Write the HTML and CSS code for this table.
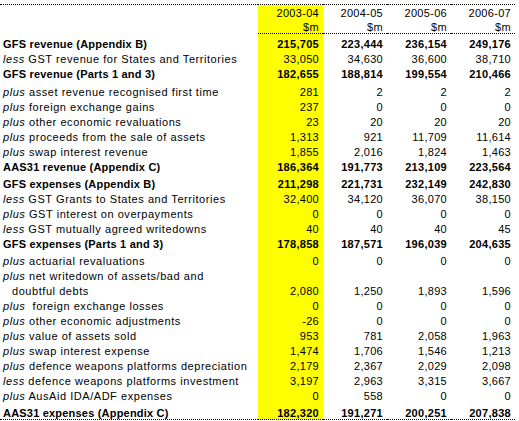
FILE: index.html
```html
<!DOCTYPE html>
<html lang="en">
<head>
    <meta charset="UTF-8">
    <meta name="viewport" content="width=device-width, initial-scale=1.0">
    <title>AAS31 reconciliation</title>
    <link rel="stylesheet" href="styles.css">
</head>
<body>
    <table class="recon">
        <colgroup>
            <col class="col_label">
            <col class="col_hl">
            <col class="col_num">
            <col class="col_num">
            <col class="col_num">
        </colgroup>
        <thead>
            <tr class="head_year">
                <th class="label"></th>
                <th class="num hl">2003-04</th>
                <th class="num">2004-05</th>
                <th class="num">2005-06</th>
                <th class="num">2006-07</th>
            </tr>
            <tr class="head_unit">
                <th class="label"></th>
                <th class="num hl">$m</th>
                <th class="num">$m</th>
                <th class="num">$m</th>
                <th class="num">$m</th>
            </tr>
        </thead>
        <tbody>
            <tr class="total gap">
                <td class="label">GFS revenue (Appendix B)</td>
                <td class="num hl">215,705</td><td class="num">223,444</td><td class="num">236,154</td><td class="num">249,176</td>
            </tr>
            <tr>
                <td class="label"><em>less</em> GST revenue for States and Territories</td>
                <td class="num hl">33,050</td><td class="num">34,630</td><td class="num">36,600</td><td class="num">38,710</td>
            </tr>
            <tr class="total">
                <td class="label">GFS revenue (Parts 1 and 3)</td>
                <td class="num hl">182,655</td><td class="num">188,814</td><td class="num">199,554</td><td class="num">210,466</td>
            </tr>
            <tr class="gap">
                <td class="label"><em>plus</em> asset revenue recognised first time</td>
                <td class="num hl">281</td><td class="num">2</td><td class="num">2</td><td class="num">2</td>
            </tr>
            <tr>
                <td class="label"><em>plus</em> foreign exchange gains</td>
                <td class="num hl">237</td><td class="num">0</td><td class="num">0</td><td class="num">0</td>
            </tr>
            <tr>
                <td class="label"><em>plus</em> other economic revaluations</td>
                <td class="num hl">23</td><td class="num">20</td><td class="num">20</td><td class="num">20</td>
            </tr>
            <tr>
                <td class="label"><em>plus</em> proceeds from the sale of assets</td>
                <td class="num hl">1,313</td><td class="num">921</td><td class="num">11,709</td><td class="num">11,614</td>
            </tr>
            <tr>
                <td class="label"><em>plus</em> swap interest revenue</td>
                <td class="num hl">1,855</td><td class="num">2,016</td><td class="num">1,824</td><td class="num">1,463</td>
            </tr>
            <tr class="total">
                <td class="label">AAS31 revenue (Appendix C)</td>
                <td class="num hl">186,364</td><td class="num">191,773</td><td class="num">213,109</td><td class="num">223,564</td>
            </tr>
            <tr class="total gap_sm">
                <td class="label">GFS expenses (Appendix B)</td>
                <td class="num hl">211,298</td><td class="num">221,731</td><td class="num">232,149</td><td class="num">242,830</td>
            </tr>
            <tr>
                <td class="label"><em>less</em> GST Grants to States and Territories</td>
                <td class="num hl">32,400</td><td class="num">34,120</td><td class="num">36,070</td><td class="num">38,150</td>
            </tr>
            <tr>
                <td class="label"><em>plus</em> GST interest on overpayments</td>
                <td class="num hl">0</td><td class="num">0</td><td class="num">0</td><td class="num">0</td>
            </tr>
            <tr>
                <td class="label"><em>less</em> GST mutually agreed writedowns</td>
                <td class="num hl">40</td><td class="num">40</td><td class="num">40</td><td class="num">45</td>
            </tr>
            <tr class="total">
                <td class="label">GFS expenses (Parts 1 and 3)</td>
                <td class="num hl">178,858</td><td class="num">187,571</td><td class="num">196,039</td><td class="num">204,635</td>
            </tr>
            <tr class="gap_sm">
                <td class="label"><em>plus</em> actuarial revaluations</td>
                <td class="num hl">0</td><td class="num">0</td><td class="num">0</td><td class="num">0</td>
            </tr>
            <tr>
                <td class="label"><em>plus</em> net writedown of assets/bad and</td>
                <td class="num hl"></td><td class="num"></td><td class="num"></td><td class="num"></td>
            </tr>
            <tr>
                <td class="label indent">doubtful debts</td>
                <td class="num hl">2,080</td><td class="num">1,250</td><td class="num">1,893</td><td class="num">1,596</td>
            </tr>
            <tr>
                <td class="label"><em>plus</em>&nbsp; foreign exchange losses</td>
                <td class="num hl">0</td><td class="num">0</td><td class="num">0</td><td class="num">0</td>
            </tr>
            <tr>
                <td class="label"><em>plus</em> other economic adjustments</td>
                <td class="num hl">-26</td><td class="num">0</td><td class="num">0</td><td class="num">0</td>
            </tr>
            <tr>
                <td class="label"><em>plus</em> value of assets sold</td>
                <td class="num hl">953</td><td class="num">781</td><td class="num">2,058</td><td class="num">1,963</td>
            </tr>
            <tr>
                <td class="label"><em>plus</em> swap interest expense</td>
                <td class="num hl">1,474</td><td class="num">1,706</td><td class="num">1,546</td><td class="num">1,213</td>
            </tr>
            <tr>
                <td class="label"><em>plus</em> defence weapons platforms depreciation</td>
                <td class="num hl">2,179</td><td class="num">2,367</td><td class="num">2,029</td><td class="num">2,098</td>
            </tr>
            <tr>
                <td class="label"><em>less</em> defence weapons platforms investment</td>
                <td class="num hl">3,197</td><td class="num">2,963</td><td class="num">3,315</td><td class="num">3,667</td>
            </tr>
            <tr>
                <td class="label"><em>plus</em> AusAid IDA/ADF expenses</td>
                <td class="num hl">0</td><td class="num">558</td><td class="num">0</td><td class="num">0</td>
            </tr>
            <tr class="total last">
                <td class="label">AAS31 expenses (Appendix C)</td>
                <td class="num hl">182,320</td><td class="num">191,271</td><td class="num">200,251</td><td class="num">207,838</td>
            </tr>
        </tbody>
    </table>
</body>
</html>
```
FILE: styles.css
```css
body{
    margin: 0px;
    padding: 0px;
    background-color: white;
}
.recon{
    margin-top: 4px;
    width: 515px;
    border-collapse: collapse;
    table-layout: fixed;
    font-family: "Liberation Sans", Arial, sans-serif;
    font-size: 11px;
    color: black;
    border-top: 1px dotted black;
    border-bottom: 1px dotted black;
}
.col_label{
    width: 258px;
}
.col_hl{
    width: 65px;
}
.col_num{
    width: 64px;
}
.recon th,
.recon td{
    box-sizing: border-box;
    padding: 0px;
    height: 15px;
    line-height: 15px;
    white-space: nowrap;
    font-weight: normal;
    overflow: visible;
}
.label{
    padding-left: 3px !important;
    text-align: left;
    letter-spacing: 0.55px;
}
.num{
    text-align: right;
    padding-right: 4px !important;
    letter-spacing: 0.3px;
}
.num.hl{
    background-color: yellow;
}
.head_year th{
    height: 14px;
    padding-top: 2px;
    line-height: 12px;
    vertical-align: top;
}
.head_unit th{
    height: 14px;
    padding-top: 2px;
    line-height: 12px;
    vertical-align: top;
}
.head_unit th.num{
    border-bottom: 1px dotted black;
}
.total td{
    font-weight: bold;
}
.total .label{
    letter-spacing: 0.2px;
}
.gap td{
    padding-top: 3px;
}
.gap_sm td{
    padding-top: 2px;
}
.indent{
    padding-left: 12px !important;
}
.last td{
    height: 15px;
    padding-top: 3px;
    vertical-align: top;
    line-height: 12px;
}
```
